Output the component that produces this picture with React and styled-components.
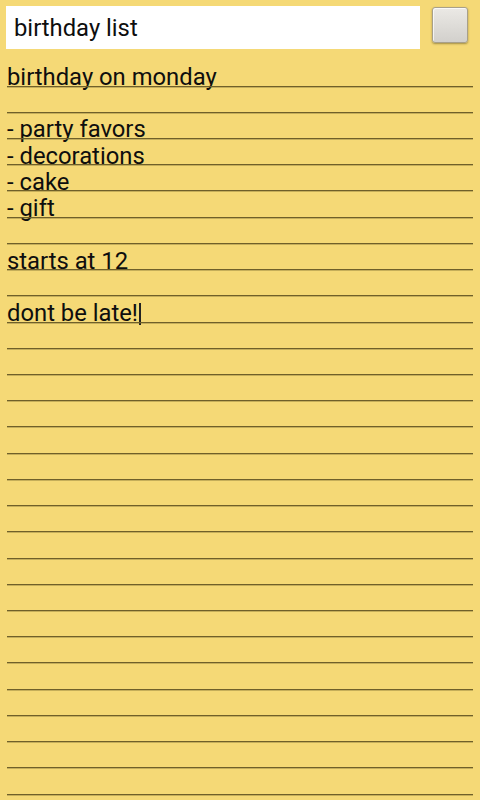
import React from "react";
import styled, { createGlobalStyle } from "styled-components";

const GlobalStyle = createGlobalStyle`
  html, body {
    margin: 0;
    padding: 0;
    background: #f5d976;
  }
  body {
    font-family: Roboto, "Noto Sans", sans-serif;
  }
`;

const Page = styled.div`
  width: 480px;
  height: 800px;
  overflow: hidden;
  background: #f5d976;
`;

const Header = styled.div`
  display: flex;
  align-items: flex-start;
  padding: 6px 12px 0 6px;
  gap: 12px;
`;

const TitleField = styled.div`
  flex: 1;
  height: 43px;
  background: #ffffff;
  box-sizing: border-box;
  padding-left: 8px;
  padding-top: 1px;
  display: flex;
  align-items: center;
  font-size: 23.8px;
  color: #0e0e0e;
`;

const SaveButton = styled.button`
  width: 36px;
  height: 36px;
  margin-top: 1px;
  border-radius: 3px;
  border: 1px solid #a8a08a;
  background: linear-gradient(180deg, #ebe9e5 0%, #dcdad6 60%, #d2d0cc 100%);
  box-shadow: 0 1px 2px rgba(60, 50, 10, 0.45), inset 1px 1px 0 rgba(255, 255, 255, 0.7);
  padding: 0;
`;

const Sheet = styled.div`
  padding: 15px 7px 0 7px;
`;

const Line = styled.div`
  position: relative;
  height: 26.22px;
  line-height: 26.22px;
  font-size: 23.8px;
  color: #0e0e0e;
  white-space: pre;

  &::after {
    content: "";
    position: absolute;
    left: 0;
    right: 0;
    top: 21.6px;
    height: 1px;
    background: #6f602a;
    box-shadow: 0 1px 0 rgba(110, 95, 40, 0.35);
  }
`;

const Caret = styled.span`
  display: inline-block;
  width: 2px;
  height: 22px;
  margin-left: 1px;
  vertical-align: -4px;
  background: #222;
`;

const lines = [
  "birthday on monday",
  "",
  "- party favors",
  "- decorations",
  "- cake",
  "- gift",
  "",
  "starts at 12",
  "",
  "dont be late!",
];

const TOTAL = 28;

export default function App() {
  const rows = Array.from({ length: TOTAL }, (_, i) => lines[i] ?? "");
  return (
    <Page>
      <GlobalStyle />
      <Header>
        <TitleField>birthday list</TitleField>
        <SaveButton aria-label="save" />
      </Header>
      <Sheet>
        {rows.map((text, i) => (
          <Line key={i}>
            {text}
            {i === lines.length - 1 && <Caret />}
          </Line>
        ))}
      </Sheet>
    </Page>
  );
}
